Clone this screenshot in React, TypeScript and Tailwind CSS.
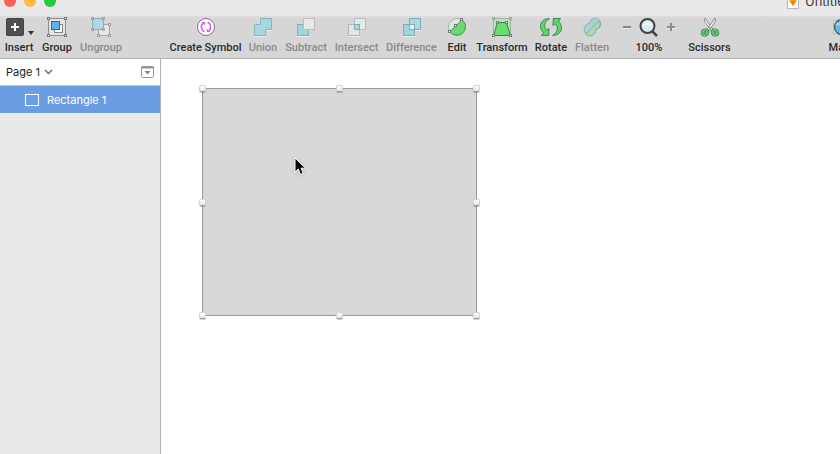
import React from "react";

interface ToolProps {
  label: string;
  width: string;
  disabled?: boolean;
  children: React.ReactNode;
}

const Tool: React.FC<ToolProps> = ({ label, width, disabled, children }) => {
  return (
    <button
      disabled={disabled}
      className={`flex shrink-0 flex-col items-center whitespace-nowrap font-['Roboto',sans-serif] text-[11px] font-medium leading-4 ${width} ${
        disabled ? "text-[#8a8a8a]" : "text-[#2b2b2b]"
      }`}
    >
      <span className="flex h-6 items-start justify-center pt-px">{children}</span>
      <span>{label}</span>
    </button>
  );
};

const Icon: React.FC<{ width?: number; children: React.ReactNode }> = ({ width = 20, children }) => {
  return (
    <svg width={width} height="21" viewBox={`0 0 ${width} 21`} fill="none" aria-hidden="true">
      {children}
    </svg>
  );
};

const Knobs: React.FC<{ points: number[][] }> = ({ points }) => {
  return (
    <g fill="#fff" stroke="#777">
      {points.map(([x, y]) => (
        <rect key={`${x}-${y}`} x={x - 1} y={y - 1} width="2" height="2" />
      ))}
    </g>
  );
};

const InsertIcon = () => (
  <Icon width={30}>
    <rect x="2" y="1" width="18" height="18" rx="2" fill="#505050" />
    <rect x="2.5" y="1.5" width="17" height="17" rx="2" stroke="#434343" />
    <path d="M7 10h8M11 6v8" stroke="#fff" strokeWidth="2" />
    <path d="M24 14h6l-3 4z" fill="#333" />
  </Icon>
);

const GroupIcon = () => (
  <Icon>
    <rect x="1.5" y="1.5" width="17" height="17" fill="#e6e6e6" stroke="#8c8c8c" />
    <rect x="7.5" y="7.5" width="8" height="8" fill="#fff" stroke="#858585" />
    <rect x="4.5" y="4.5" width="8" height="8" fill="#5eb1f3" stroke="#2869a8" />
    <Knobs points={[[1.5, 1.5], [18.5, 1.5], [1.5, 18.5], [18.5, 18.5]]} />
  </Icon>
);

const UngroupIcon = () => (
  <Icon>
    <g opacity="0.6">
      <rect x="7.5" y="7.5" width="11" height="11" fill="#f2f2f2" stroke="#858585" />
      <Knobs points={[[7.5, 18.5], [18.5, 7.5], [18.5, 18.5]]} />
    </g>
    <rect x="1.5" y="1.5" width="11" height="11" fill="#add8e8" stroke="#8fafbf" />
    <g opacity="0.55">
      <Knobs points={[[1.5, 1.5], [12.5, 1.5], [1.5, 12.5], [12.5, 12.5]]} />
    </g>
  </Icon>
);

const SymbolIcon = () => (
  <Icon>
    <circle cx="10" cy="10" r="8.5" fill="#fff" stroke="#8a659b" />
    <g stroke="#d262e3" strokeWidth="1.6">
      <path d="M8.5 14.5C4.600 13.500 4.600 7.500 7.300 6.200" />
      <path d="M11.500 5.500C15.400 6.500 15.400 12.500 12.700 13.800" />
    </g>
    <path d="M5.800 5h3.400v3.400zM14.200 15h-3.400v-3.400z" fill="#d262e3" />
  </Icon>
);

const UnionIcon = () => (
  <Icon>
    <path d="M1 19.5h12M13 13.5h6" stroke="#eee" />
    <path d="M7.5 1.5h11v11h-6v6h-11v-11h6z" fill="#a4d9df" stroke="#86b3b8" />
  </Icon>
);

const SubtractIcon = () => (
  <Icon>
    <path d="M1 19.5h12" stroke="#eee" />
    <rect x="1.5" y="7.5" width="11" height="11" fill="#9dd7dc" stroke="#80b1b6" />
    <rect x="7.5" y="1.5" width="11" height="11" fill="#e8e8e8" stroke="#bcbcbc" />
  </Icon>
);

const IntersectIcon = () => (
  <Icon>
    <path d="M1 19.5h12" stroke="#eee" />
    <rect x="7.5" y="1.5" width="11" height="11" fill="#e8e8e8" stroke="#bcbcbc" />
    <rect x="1.5" y="7.5" width="11" height="11" fill="#e5e5e5" stroke="#b5b5b5" />
    <rect x="7.5" y="7.5" width="5" height="5" fill="#a4d9df" stroke="#79aeb4" />
  </Icon>
);

const DifferenceIcon = () => (
  <Icon>
    <path d="M1 19.5h12M13 13.5h6" stroke="#eee" />
    <rect x="7.5" y="1.5" width="11" height="11" fill="#aadbe3" stroke="#80adb5" />
    <rect x="1.5" y="7.5" width="11" height="11" fill="#9dd7dc" stroke="#80adb5" />
    <rect x="7.5" y="7.5" width="5" height="5" fill="#eee" stroke="#80adb5" />
  </Icon>
);

const EditIcon = () => (
  <Icon>
    <circle cx="10" cy="10" r="8.5" fill="#dcebdd" stroke="#a4b8a6" />
    <path d="M3 14.5L15 2.8A8.5 8.5 0 1 1 3 14.5z" fill="#68db71" stroke="#439a4b" />
    <Knobs points={[[2.5, 14.5], [8.5, 8.5], [14.5, 2.5]]} />
  </Icon>
);

const TransformIcon = () => (
  <Icon>
    <rect x="1.5" y="1.5" width="17" height="17" fill="#bee2c0" stroke="#9fb7a1" />
    <path d="M5.5 5.5h9l4 13h-17z" fill="#68db71" stroke="#398441" />
    <g opacity="0.5">
      <Knobs points={[[1.5, 1.5], [18.5, 1.5]]} />
    </g>
    <Knobs points={[[5.5, 5.5], [14.5, 5.5], [1.5, 18.5], [18.5, 18.5]]} />
  </Icon>
);

const RotateIcon = () => (
  <Icon width={24}>
    <g fill="#5ed769" stroke="#397f43" strokeWidth="0.9" strokeLinejoin="round">
      <path d="M10.500 1.500C5 1.500 1.300 5 1.500 9.500c.1 2.500 1.200 4.500 2.900 6L2.500 18.500h7.200l.3-7.200-2.200 1.900C4 9.500 5.500 4.500 10.500 1.500z" />
      <path d="M13.500 18.500c5.500 0 9.200-3.500 9-8-.1-2.500-1.200-4.500-2.900-6l1.900-3h-7.200l-.3 7.200 2.200-1.900c3.800 3.700 2.300 8.700-2.700 11.700z" />
    </g>
  </Icon>
);

const FlattenIcon = () => (
  <Icon>
    <g opacity="0.8">
      <path
        d="M7.5 6.5A5.7 5.7 0 1 1 13.5 12.5A5.7 5.7 0 1 1 7.5 6.5z"
        fill="#9fd1df"
        stroke="#75a9ae"
      />
      <path
        d="M17 3.5A5.7 5.7 0 0 1 13.5 12.5A5.7 5.7 0 0 1 3.5 17z"
        fill="#9edaa2"
        stroke="#75a980"
      />
    </g>
  </Icon>
);

const ScissorsIcon = () => (
  <Icon>
    <g fill="#f3f3f3" stroke="#747474" strokeWidth="0.8">
      <path d="M5 1c-1 2 0 4 1 5.500L11.500 14l1.500-1.500z" />
      <path d="M15 1c1 2 0 4-1 5.500L8.500 14 7 12.500z" />
    </g>
    <g stroke="#397f47" strokeWidth="3.6">
      <ellipse cx="5" cy="15.5" rx="2.6" ry="2.2" transform="rotate(-30 5 15.5)" />
      <ellipse cx="15" cy="15.5" rx="2.6" ry="2.2" transform="rotate(30 15 15.5)" />
    </g>
    <g stroke="#62c972" strokeWidth="2">
      <ellipse cx="5" cy="15.5" rx="2.6" ry="2.2" transform="rotate(-30 5 15.5)" />
      <ellipse cx="15" cy="15.5" rx="2.6" ry="2.2" transform="rotate(30 15 15.5)" />
    </g>
    <circle cx="10" cy="11" r="0.7" fill="#666" />
  </Icon>
);

const MaskIcon = () => (
  <Icon>
    <rect x="1.5" y="3.5" width="17" height="13" fill="#e8e8e8" stroke="#bababa" />
    <circle cx="10" cy="10" r="7.5" fill="#68b5f4" stroke="#39745a" strokeWidth="1.5" />
    <path d="M4 8c4-3 8 2 12-1" stroke="#a7d6fa" strokeWidth="2" />
  </Icon>
);

const TitleBar = () => {
  return (
    <div className="-mt-2.5 flex h-[22px] items-center">
      <div className="flex w-[787px] shrink-0 gap-2 pl-1">
        <button aria-label="Close" className="h-3 w-3 rounded-full bg-[#fc605c]" />
        <button aria-label="Minimize" className="h-3 w-3 rounded-full bg-[#fdbc40]" />
        <button aria-label="Zoom window" className="h-3 w-3 rounded-full bg-[#27c93f]" />
      </div>
      <svg width="12" height="15" viewBox="0 0 12 15" fill="none" className="shrink-0" aria-hidden="true">
        <path d="M.5.5h11v14H.5z" fill="#fff" stroke="#b5b5b5" />
        <path d="M2 7l2-2h4l2 2-4 5z" fill="#f7a21b" />
        <path d="M4 7h4l-2 5z" fill="#ee7420" />
      </svg>
      <span className="ml-1.5 text-[13px] leading-4 text-[#3b3b3b]">Untitled</span>
    </div>
  );
};

const Toolbar = () => {
  return (
    <div className="flex pb-0.5 pt-1">
      <Tool label="Insert" width="w-[38px]"><InsertIcon /></Tool>
      <Tool label="Group" width="w-[38px]"><GroupIcon /></Tool>
      <Tool label="Ungroup" width="w-[50px]" disabled><UngroupIcon /></Tool>
      <div className="w-[39px] shrink-0" />
      <Tool label="Create Symbol" width="w-[81px]"><SymbolIcon /></Tool>
      <Tool label="Union" width="w-[34px]" disabled><UnionIcon /></Tool>
      <Tool label="Subtract" width="w-[52px]" disabled><SubtractIcon /></Tool>
      <Tool label="Intersect" width="w-[49px]" disabled><IntersectIcon /></Tool>
      <Tool label="Difference" width="w-[61px]" disabled><DifferenceIcon /></Tool>
      <Tool label="Edit" width="w-[30px]"><EditIcon /></Tool>
      <Tool label="Transform" width="w-[60px]"><TransformIcon /></Tool>
      <Tool label="Rotate" width="w-[38px]"><RotateIcon /></Tool>
      <Tool label="Flatten" width="w-[44px]" disabled><FlattenIcon /></Tool>
      <div className="flex w-[70px] shrink-0 flex-col items-center font-['Roboto',sans-serif] text-[11px] font-medium leading-4 text-[#2b2b2b]">
        <div className="flex h-6 items-start gap-0.5 pt-px">
          <button aria-label="Zoom out">
            <Icon width={16}>
              <path d="M3 11.5h8" stroke="#eee" />
              <path d="M3 10h8" stroke="#858585" strokeWidth="2" />
            </Icon>
          </button>
          <Icon width={22}>
            <path d="M14 14l5 5" stroke="#444" strokeWidth="2.5" />
            <circle cx="9.5" cy="9" r="7" fill="#d8eff6" stroke="#424242" strokeWidth="2" />
            <path d="M5 8a5 5 0 0 1 9 0" fill="#eef9fc" />
          </Icon>
          <button aria-label="Zoom in">
            <Icon width={16}>
              <path d="M5 11.5h9" stroke="#eee" />
              <path d="M5 10h8M9 6v8" stroke="#8d8d8d" strokeWidth="2" />
            </Icon>
          </button>
        </div>
        <span>100%</span>
      </div>
      <Tool label="Scissors" width="w-[51px]"><ScissorsIcon /></Tool>
      <div className="w-[89px] shrink-0" />
      <Tool label="Mask" width="w-9"><MaskIcon /></Tool>
    </div>
  );
};

const Sidebar = () => {
  return (
    <aside className="w-[161px] shrink-0 border-r border-[#b0b0b0] bg-[#e9e9e9] text-[11px] leading-4">
      <div className="flex h-[27px] items-center justify-between border-b border-[#c4c4c4] bg-white px-1.5">
        <button className="flex items-center gap-1 text-[#222]">
          Page 1
          <svg width="9" height="6" viewBox="0 0 9 6" fill="none" aria-hidden="true">
            <path d="M1 1l3.5 3.5L8 1" stroke="#707070" strokeWidth="1.5" />
          </svg>
        </button>
        <button aria-label="Toggle page list">
          <svg width="13" height="12" viewBox="0 0 13 12" fill="none" aria-hidden="true">
            <rect x="0.5" y="0.5" width="12" height="11" rx="1" stroke="#969696" />
            <path d="M0 1.5h13" stroke="#969696" strokeWidth="2" />
            <path d="M3.5 5h6l-3 3.5z" fill="#858585" />
          </svg>
        </button>
      </div>
      <button className="flex h-[27px] w-full items-center gap-2 bg-[#6a9de2] pl-[25px] text-white">
        <svg width="14" height="12" viewBox="0 0 14 12" fill="none" aria-hidden="true">
          <rect x="0.5" y="0.5" width="13" height="11" stroke="#fff" />
        </svg>
        Rectangle 1
      </button>
    </aside>
  );
};

// resize handles, placed around the selected shape
const handles = [
  "-left-1 -top-1",
  "left-[133px] -top-1",
  "-right-1 -top-1",
  "-left-1 top-[110px]",
  "-right-1 top-[110px]",
  "-left-1 -bottom-1",
  "left-[133px] -bottom-1",
  "-right-1 -bottom-1",
];

const Canvas = () => {
  return (
    <main className="relative grow bg-white">
      <div className="absolute left-[41px] top-[29px] h-[228px] w-[275px] border border-[#999] bg-[#d8d8d8]">
        {handles.map((place) => (
          <span
            key={place}
            className={`absolute h-[7px] w-[7px] rounded-[2px] border border-[#d4d4d4] border-b-[#999] bg-linear-to-b from-white to-[#e4e4e4] shadow-[0_1px_1px_#0003] ${place}`}
          />
        ))}
        <svg
          width="13"
          height="19"
          viewBox="0 0 13 19"
          className="absolute left-[91px] top-[68px] drop-shadow-sm"
          aria-hidden="true"
        >
          <path
            d="M1 1v14l3.300-3 2.300 5.500 2.600-1.100L7 11.200h4.500z"
            fill="#000"
            stroke="#fff"
            strokeWidth="1"
          />
        </svg>
      </div>
    </main>
  );
};

const App = () => {
  return (
    <div className="flex h-screen flex-col overflow-hidden bg-white font-['Inter',sans-serif]">
      <header className="shrink-0 overflow-hidden border-b border-[#b2b2b2] bg-linear-to-b from-[#e9e9e9] from-[16px] via-[#dfdbdf] via-[16px] to-[#d6d6d6] to-[20px]">
        <TitleBar />
        <Toolbar />
      </header>
      <div className="flex min-h-0 grow">
        <Sidebar />
        <Canvas />
      </div>
    </div>
  );
};

export default App;
